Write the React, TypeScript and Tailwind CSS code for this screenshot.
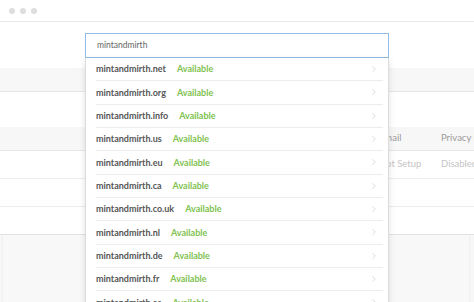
import { ChevronRight } from "lucide-react";

const domains = [
	"mintandmirth.net",
	"mintandmirth.org",
	"mintandmirth.info",
	"mintandmirth.us",
	"mintandmirth.eu",
	"mintandmirth.ca",
	"mintandmirth.co.uk",
	"mintandmirth.nl",
	"mintandmirth.de",
	"mintandmirth.fr",
	"mintandmirth.es",
];

export default function App() {
	return (
		<div
			className="relative w-[474px] h-[302px] overflow-hidden bg-white"
			style={{ fontFamily: "Lato, 'Open Sans', sans-serif" }}
		>
			<TitleBar />
			<div className="h-[46px]" />
			<div className="h-[24px] bg-[#f7f7f7] border-b border-[#e6e6e6]" />
			<div className="h-[35px]" />
			<Table />
			<DomainSearch />
		</div>
	);
}

function TitleBar() {
	return (
		<div className="h-[22px] flex items-center gap-[5px] pl-[9px] border-b border-[#e8e8e8]">
			<span className="size-[6px] rounded-full bg-[#dedede]" />
			<span className="size-[6px] rounded-full bg-[#dedede]" />
			<span className="size-[6px] rounded-full bg-[#dedede]" />
		</div>
	);
}

function Table() {
	return (
		<div className="text-[9.5px]">
			<div className="h-[24px] bg-[#f7f7f7] border-b border-[#e6e6e6] flex items-center text-[#9a9a9a] whitespace-nowrap">
				<span className="ml-[379px] w-[62px] shrink-0">Email</span>
				<span className="shrink-0">Privacy Protection</span>
			</div>
			<div className="h-[28px] border-b border-[#ececec] flex items-center text-[#c4c4c4] whitespace-nowrap">
				<span className="ml-[379px] w-[62px] shrink-0">Not Setup</span>
				<span className="shrink-0">Disabled</span>
			</div>
			<div className="h-[28px] border-b border-[#ececec]" />
			<div className="h-[28px] border-b border-[#e2e2e2]" />
			<div className="h-[70px] bg-[#f7f7f7] px-[2px]">
				<div className="h-full mr-[2px] bg-[#f8f8f8] border-x border-[#f0f0f0]" />
			</div>
		</div>
	);
}

function DomainSearch() {
	return (
		<div className="absolute left-[85px] top-[33px] w-[304px]">
			<div className="h-[25px] border border-[#93bde6] bg-white flex items-center pl-[11px] text-[8.5px] text-[#666]">
				mintandmirth
			</div>
			<div className="bg-white border-x border-[#dcdcdc] shadow-[0_2px_6px_rgba(0,0,0,0.12)]">
				{domains.map((d) => (
					<div
						key={d}
						className="h-[23.33px] ml-[10px] mr-[5px] flex items-center border-b border-[#ececec] text-[9px] font-bold"
					>
						<span className="text-[#555]">{d}</span>
						<span className="ml-[11px] text-[#80c250]">Available</span>
						<ChevronRight
							className="ml-auto mr-[4px] text-[#c4c4c4]"
							size={10}
							strokeWidth={1.5}
						/>
					</div>
				))}
			</div>
		</div>
	);
}
